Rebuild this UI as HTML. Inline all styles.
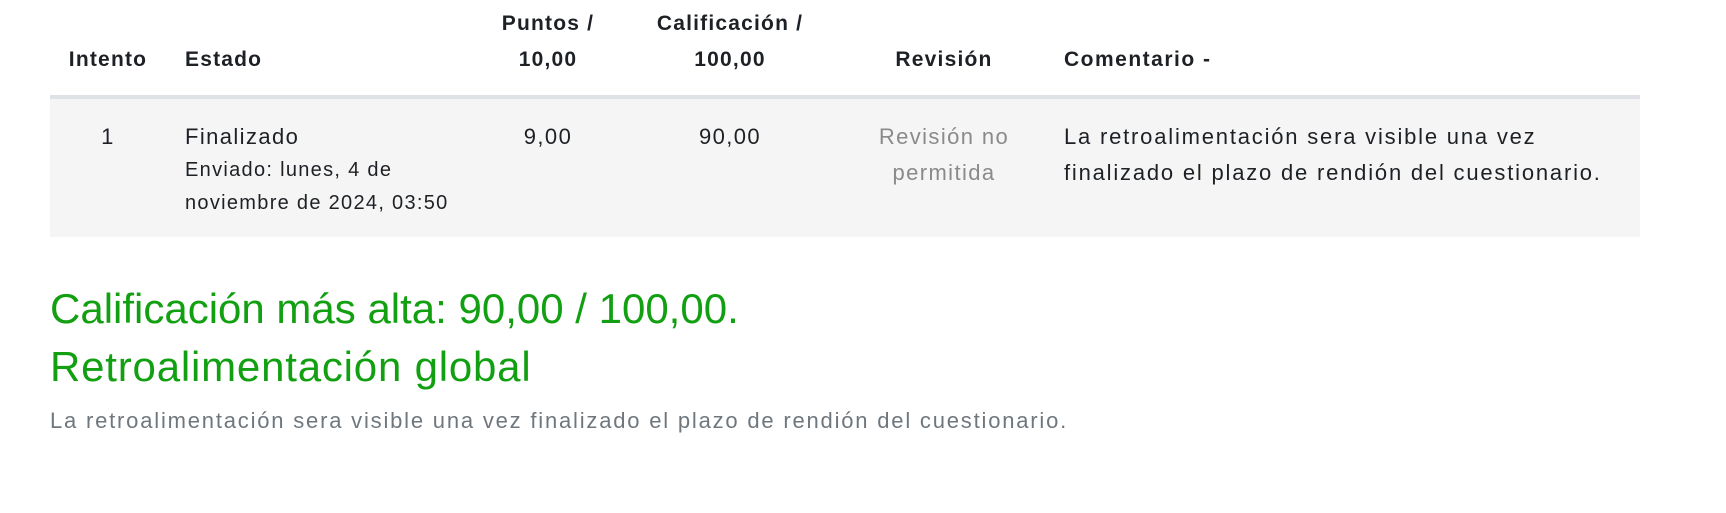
<!DOCTYPE html>
<html><head><meta charset="utf-8"><style>
body{margin:0;width:1726px;height:513px;background:#fff;font-family:"Liberation Sans",sans-serif;position:relative;overflow:hidden;color:#1d2125}
.a{position:absolute;white-space:nowrap;line-height:36px}
.h{font-weight:bold;font-size:21px;letter-spacing:1.2px}
.c{text-align:center;transform:translateX(-50%)}
.r{font-size:22px;letter-spacing:1.4px}
.s{font-size:20px;line-height:33px;letter-spacing:1.3px}
.g{color:#12a012;font-size:42px;line-height:50px}
</style></head><body>
<div style="position:absolute;left:50px;top:95px;width:1590px;height:4px;background:#dee2e6"></div>
<div style="position:absolute;left:50px;top:99px;width:1590px;height:138px;background:#f5f5f5"></div>
<div class="a h c" style="left:108px;top:42px">Intento</div>
<div class="a h" style="left:185px;top:42px">Estado</div>
<div class="a h c" style="left:548px;top:6px">Puntos /<br>10,00</div>
<div class="a h c" style="left:730px;top:6px">Calificación /<br>100,00</div>
<div class="a h c" style="left:944px;top:42px">Revisión</div>
<div class="a h" style="left:1064px;top:42px;letter-spacing:1.5px">Comentario -</div>
<div class="a r c" style="left:108px;top:119px">1</div>
<div class="a r" style="left:185px;top:119px">Finalizado</div>
<div class="a s" style="left:185px;top:154px">Enviado: lunes, 4 de<br>noviembre de 2024, 03:50</div>
<div class="a r c" style="left:548px;top:119px">9,00</div>
<div class="a r c" style="left:730px;top:119px">90,00</div>
<div class="a r c" style="left:944px;top:119px;color:#8a8a8a;text-align:center">Revisión no<br>permitida</div>
<div class="a r" style="left:1064px;top:119px;letter-spacing:1.8px">La retroalimentación sera visible una vez<br>finalizado el plazo de rendión del cuestionario.</div>
<div class="a g" style="left:50px;top:284px">Calificación más alta: 90,00 / 100,00.</div>
<div class="a g" style="left:50px;top:342px;letter-spacing:0.8px">Retroalimentación global</div>
<div class="a" style="left:50px;top:403px;font-size:22px;letter-spacing:1.8px;color:#6f777e">La retroalimentación sera visible una vez finalizado el plazo de rendión del cuestionario.</div>
</body></html>
